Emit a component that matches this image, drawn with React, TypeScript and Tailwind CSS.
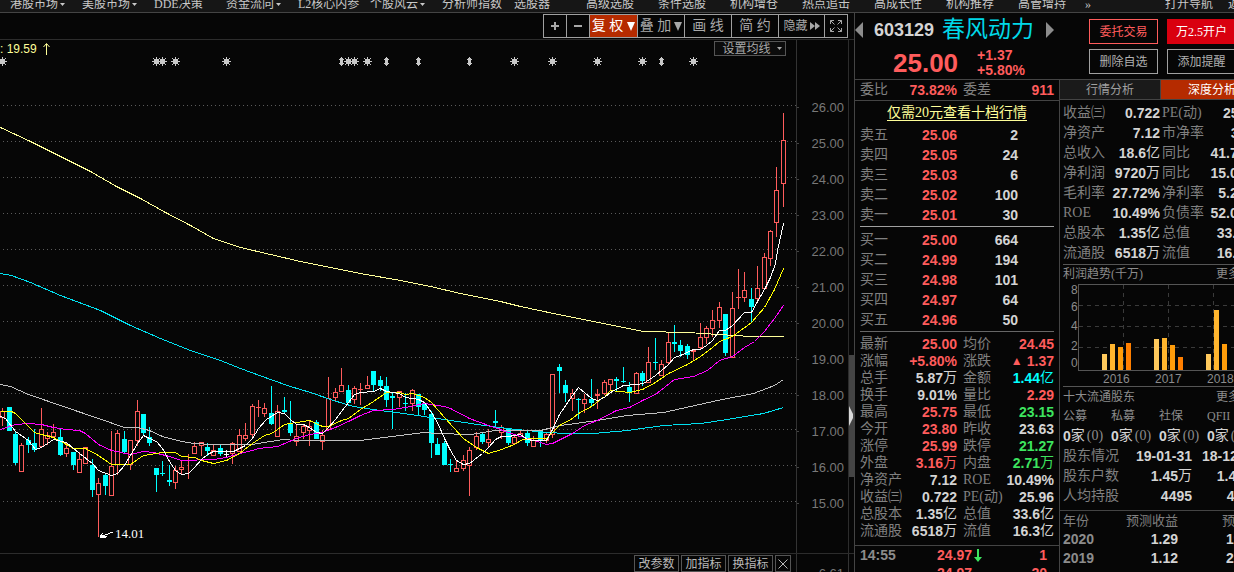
import type { ReactNode } from "react";

type Tone = "red" | "green" | "cyan" | "white" | "gray";

const toneClass: Record<Tone, string> = {
  red: "text-[#ff5c5c]",
  green: "text-[#3de45f]",
  cyan: "text-[#00ffff]",
  white: "text-[#d4d4d4]",
  gray: "text-[#8c8c8c]",
};

const menuItems = [
  { label: "港股市场", menu: true },
  { label: "美股市场", menu: true },
  { label: "DDE决策" },
  { label: "资金流向", menu: true },
  { label: "L2核心内参" },
  { label: "个股风云", menu: true },
  { label: "分析师指数" },
  { label: "选股器" },
  { label: "高级选股" },
  { label: "条件选股" },
  { label: "机构增仓" },
  { label: "热点追击" },
  { label: "高成长性" },
  { label: "机构推荐" },
  { label: "高管增持" },
];

// [x, high, low, bodyTop, bodyBottom, direction]
type Candle = [number, number, number, number, number, "u" | "d" | "f"];

const candles: Candle[] = [
  [2, 408, 426, 411, 418, "u"],
  [9, 407, 431, 407, 431, "d"],
  [15, 432, 465, 434, 463, "d"],
  [21, 443, 472, 445, 472, "u"],
  [28, 437, 453, 440, 445, "d"],
  [34, 429, 452, 443, 450, "d"],
  [41, 408, 447, 429, 447, "u"],
  [47, 432, 445, 435, 439, "u"],
  [53, 424, 438, 432, 437, "u"],
  [60, 429, 456, 437, 455, "d"],
  [66, 442, 457, 448, 454, "u"],
  [73, 452, 470, 452, 465, "d"],
  [79, 452, 473, 459, 473, "u"],
  [85, 447, 464, 447, 464, "u"],
  [92, 459, 497, 465, 490, "d"],
  [98, 478, 537, 483, 495, "u"],
  [105, 474, 495, 475, 486, "d"],
  [111, 431, 496, 466, 496, "u"],
  [117, 430, 475, 433, 465, "u"],
  [124, 431, 454, 439, 452, "d"],
  [130, 440, 470, 440, 465, "u"],
  [137, 400, 446, 411, 441, "u"],
  [143, 414, 436, 414, 433, "d"],
  [149, 427, 446, 437, 443, "d"],
  [156, 468, 492, 468, 475, "d"],
  [162, 461, 476, 473, 474, "d"],
  [169, 465, 486, 480, 482, "d"],
  [175, 466, 489, 470, 483, "u"],
  [181, 461, 475, 467, 470, "u"],
  [188, 454, 479, 460, 461, "u"],
  [194, 442, 454, 446, 454, "u"],
  [201, 442, 456, 442, 446, "u"],
  [207, 443, 456, 447, 451, "d"],
  [213, 444, 456, 450, 456, "u"],
  [220, 445, 456, 448, 454, "d"],
  [226, 450, 457, 454, 455, "f"],
  [232, 442, 464, 443, 454, "u"],
  [239, 429, 452, 435, 452, "u"],
  [245, 423, 441, 435, 439, "u"],
  [252, 404, 439, 406, 435, "u"],
  [258, 400, 417, 407, 408, "u"],
  [264, 403, 417, 408, 414, "u"],
  [271, 386, 425, 413, 424, "d"],
  [277, 405, 437, 411, 437, "u"],
  [284, 397, 414, 410, 412, "d"],
  [290, 401, 436, 424, 433, "d"],
  [296, 424, 446, 436, 442, "u"],
  [303, 425, 439, 426, 433, "u"],
  [309, 421, 446, 426, 431, "u"],
  [316, 420, 439, 422, 439, "d"],
  [322, 430, 450, 435, 442, "u"],
  [328, 377, 430, 398, 430, "u"],
  [335, 388, 401, 392, 398, "u"],
  [341, 368, 392, 385, 392, "u"],
  [348, 385, 403, 390, 403, "d"],
  [354, 386, 404, 388, 400, "u"],
  [360, 383, 405, 389, 390, "u"],
  [367, 376, 389, 385, 389, "u"],
  [373, 371, 392, 371, 385, "d"],
  [380, 376, 391, 380, 386, "d"],
  [386, 377, 407, 386, 400, "d"],
  [392, 392, 429, 396, 398, "d"],
  [399, 391, 407, 391, 398, "u"],
  [405, 393, 411, 403, 404, "d"],
  [412, 389, 411, 390, 404, "u"],
  [418, 394, 416, 394, 407, "d"],
  [424, 403, 415, 404, 410, "d"],
  [431, 411, 458, 414, 443, "d"],
  [437, 438, 455, 444, 455, "d"],
  [444, 441, 465, 443, 465, "d"],
  [450, 459, 472, 464, 465, "d"],
  [456, 461, 472, 468, 472, "u"],
  [463, 455, 471, 460, 469, "u"],
  [469, 447, 496, 450, 466, "u"],
  [476, 432, 450, 436, 448, "u"],
  [482, 432, 444, 434, 442, "d"],
  [488, 429, 448, 439, 443, "u"],
  [495, 410, 427, 421, 423, "d"],
  [501, 425, 439, 427, 433, "u"],
  [508, 428, 445, 429, 443, "d"],
  [514, 435, 444, 437, 444, "u"],
  [520, 431, 437, 433, 437, "u"],
  [527, 431, 446, 433, 443, "d"],
  [533, 436, 447, 440, 447, "u"],
  [540, 431, 447, 431, 441, "d"],
  [546, 433, 443, 434, 441, "u"],
  [552, 374, 438, 374, 435, "u"],
  [559, 364, 393, 367, 371, "d"],
  [565, 380, 402, 385, 393, "d"],
  [572, 389, 411, 393, 399, "u"],
  [578, 398, 419, 399, 400, "d"],
  [584, 394, 413, 399, 404, "u"],
  [591, 379, 407, 399, 403, "d"],
  [597, 389, 409, 394, 396, "u"],
  [604, 380, 395, 382, 394, "u"],
  [610, 379, 390, 379, 385, "u"],
  [616, 377, 391, 379, 381, "d"],
  [623, 367, 383, 381, 382, "d"],
  [629, 382, 402, 387, 392, "d"],
  [636, 372, 394, 373, 394, "u"],
  [642, 371, 386, 373, 381, "d"],
  [648, 347, 383, 362, 383, "u"],
  [655, 338, 370, 362, 363, "d"],
  [661, 360, 376, 364, 376, "u"],
  [668, 333, 364, 342, 363, "u"],
  [674, 325, 352, 342, 344, "d"],
  [680, 340, 357, 345, 351, "d"],
  [687, 344, 359, 346, 355, "d"],
  [693, 349, 360, 350, 352, "u"],
  [700, 323, 349, 337, 348, "u"],
  [706, 326, 344, 328, 338, "u"],
  [712, 310, 337, 320, 329, "u"],
  [719, 302, 328, 307, 321, "u"],
  [725, 314, 356, 314, 353, "d"],
  [732, 292, 358, 308, 358, "u"],
  [738, 269, 309, 297, 298, "u"],
  [744, 272, 302, 290, 298, "u"],
  [751, 288, 323, 299, 307, "d"],
  [757, 266, 300, 288, 299, "u"],
  [764, 253, 289, 257, 289, "u"],
  [770, 230, 266, 231, 259, "u"],
  [776, 167, 237, 190, 223, "u"],
  [783, 113, 207, 140, 184, "u"],
];

const averages = [
  {
    name: "MA250",
    color: "#ffff99",
    points:
      "0,127 30,141 48,150 90,171 116,186 140,198 165,212 190,225 213,238 240,247 270,254 300,261 330,267 360,273 400,280 430,286 460,293 500,301 520,306 553,313 593,321 643,331 687,332 750,336 783,336",
  },
  {
    name: "MA120",
    color: "#00e0f0",
    points:
      "0,273 11,275 30,282 60,295 100,310 130,325 160,338 190,350 220,360 240,368 270,379 290,386 310,392 333,400 353,406 380,410 403,413 437,418 477,424 507,428 546,432 567,433 593,433 627,430 663,425 700,423 727,419 763,413 783,407",
  },
  {
    name: "MA60",
    color: "#c0c0c0",
    points:
      "0,384 10,386 28,394 60,405 98,418 124,427 137,427 149,430 162,436 181,441 194,443 213,444 252,444 270,441 283,439 296,440 360,440 392,436 424,432 437,433 470,434 495,430 540,430 560,425 597,420 627,415 663,412 717,400 753,393 774,385 783,379",
  },
  {
    name: "MA20",
    color: "#ff00ff",
    points:
      "0,429 15,424 28,423 41,424 53,427 66,429 79,430 85,433 98,444 111,450 130,454 143,451 153,452 169,456 181,460 213,459 226,457 239,453 252,450 258,448 277,446 296,438 309,434 322,432 335,427 348,421 360,415 373,410 392,409 405,407 424,403 444,406 450,408 469,418 488,425 514,434 540,442 546,444 552,443 572,433 584,425 597,420 616,410 629,407 642,400 655,394 674,379 693,376 707,370 719,360 732,356 744,347 754,341 764,331 774,318 783,305",
  },
  {
    name: "MA10",
    color: "#ffff00",
    points:
      "0,411 11,411 15,413 25,423 34,432 41,434 53,437 66,444 73,448 85,448 98,455 111,464 130,464 137,459 143,455 162,452 175,452 181,456 194,457 201,460 213,463 226,460 239,453 252,443 264,435 271,433 277,429 284,424 296,422 309,420 322,426 328,426 341,420 348,418 360,409 373,401 386,392 399,392 405,394 412,393 424,397 431,402 444,417 463,438 476,447 488,453 501,449 514,444 522,439 533,438 546,438 552,432 559,425 572,418 578,413 591,406 604,396 610,390 629,392 642,389 655,382 668,373 687,364 700,356 712,347 719,341 732,336 751,322 764,307 774,289 783,268",
  },
  {
    name: "MA5",
    color: "#ffffff",
    points:
      "0,416 5,418 15,431 28,440 35,449 41,447 53,439 66,442 79,453 92,463 98,470 111,475 117,473 124,465 130,455 137,443 143,435 149,438 156,441 162,448 169,461 175,470 181,474 188,473 194,467 201,459 207,454 213,451 233,451 239,448 245,445 252,438 258,428 266,419 277,412 284,413 290,419 296,424 303,424 309,427 316,432 322,433 328,427 335,419 341,411 348,402 354,394 360,392 373,391 380,388 386,391 399,393 405,397 412,398 418,399 424,402 431,412 437,422 444,438 450,450 456,460 463,464 469,463 482,453 488,447 495,439 501,436 508,436 520,434 527,439 533,440 546,440 552,429 559,414 572,395 578,387 591,398 597,400 604,397 610,392 623,385 636,384 643,383 655,375 668,364 674,357 680,355 693,349 700,349 706,345 712,340 719,330 725,330 732,325 744,312 751,312 757,301 764,289 770,277 775,263 777,250 783,223",
  },
];

const gridLines = [106, 142, 178, 214, 250, 286, 322, 358, 394, 430, 466, 502];
const starMarks = [2, 156, 162, 175, 226, 348, 354, 367, 514, 552, 597, 642, 693];
const arrowMarks = [341, 386, 418, 469, 661];

const sells = [
  ["卖五", "25.06", "2"],
  ["卖四", "25.05", "24"],
  ["卖三", "25.03", "6"],
  ["卖二", "25.02", "100"],
  ["卖一", "25.01", "30"],
];

const buys = [
  ["买一", "25.00", "664"],
  ["买二", "24.99", "194"],
  ["买三", "24.98", "101"],
  ["买四", "24.97", "64"],
  ["买五", "24.96", "50"],
];

const quotes: [string, string, Tone, string, string, Tone][] = [
  ["最新", "25.00", "red", "均价", "24.45", "red"],
  ["涨幅", "+5.80%", "red", "涨跌", "▲1.37", "red"],
  ["总手", "5.87万", "white", "金额", "1.44亿", "cyan"],
  ["换手", "9.01%", "white", "量比", "2.29", "red"],
  ["最高", "25.75", "red", "最低", "23.15", "green"],
  ["今开", "23.80", "red", "昨收", "23.63", "white"],
  ["涨停", "25.99", "red", "跌停", "21.27", "green"],
  ["外盘", "3.16万", "red", "内盘", "2.71万", "green"],
  ["净资产", "7.12", "white", "ROE", "10.49%", "white"],
  ["收益㈢", "0.722", "white", "PE(动)", "25.96", "white"],
  ["总股本", "1.35亿", "white", "总值", "33.6亿", "white"],
  ["流通股", "6518万", "white", "流值", "16.3亿", "white"],
];

const finance = [
  ["收益㈢", "0.722", "PE(动)", "25.96"],
  ["净资产", "7.12", "市净率", "3.51"],
  ["总收入", "18.6亿", "同比", "41.76%"],
  ["净利润", "9720万", "同比", "15.02%"],
  ["毛利率", "27.72%", "净利率", "5.23%"],
  ["ROE", "10.49%", "负债率", "52.02%"],
  ["总股本", "1.35亿", "总值", "33.6亿"],
  ["流通股", "6518万", "流值", "16.3亿"],
];

const profitBars = [
  [1102, 354, "#ffc95c"],
  [1110, 344, "#ffb52e"],
  [1118, 347, "#ff9c0a"],
  [1126, 343, "#ff7f00"],
  [1154, 339, "#ffc95c"],
  [1162, 338, "#ffb52e"],
  [1170, 345, "#ff9c0a"],
  [1178, 357, "#ff7f00"],
  [1206, 354, "#ffc95c"],
  [1214, 310, "#ffb52e"],
  [1222, 344, "#ff9c0a"],
] as const;

const funds = ["公募", "私募", "社保", "QFII"];

// Digits are bold, the trailing unit is a regular CJK glyph.
function Num({ value, tone = "white" }: { value: string; tone?: Tone }) {
  const [, lead, digits, unit] = value.match(/^(▲?)([^万亿]*)([万亿]?)$/) ?? ["", "", value, ""];
  return (
    <span className={`inline-flex items-center whitespace-nowrap ${toneClass[tone]}`}>
      {lead && <span className="mr-1 text-xs leading-none">{lead}</span>}
      <span className="font-['Liberation_Sans',sans-serif] text-[14px] font-bold leading-none">{digits}</span>
      {unit && <span className="text-[14px] leading-none">{unit}</span>}
    </span>
  );
}

function Caret() {
  return (
    <svg width="5" height="3" viewBox="0 0 5 3" fill="currentColor" aria-hidden="true">
      <path d="M0 0h5L2.500 3z" />
    </svg>
  );
}

function TopMenu() {
  return (
    <nav className="flex h-[13px] shrink-0 overflow-hidden border-b border-[#444] bg-[#161616] text-xs leading-none text-[#c8c8c8]">
      <div className="-mt-[2px] flex min-w-0 flex-1 items-start overflow-hidden pl-[10px]">
        {menuItems.map((item) => (
          <button key={item.label} className="flex w-[72px] shrink-0 items-center gap-[2px] whitespace-nowrap">
            {item.label}
            {item.menu && <Caret />}
          </button>
        ))}
      </div>
      <div className="-mt-[2px] flex w-[149px] shrink-0 items-start overflow-hidden">
        <button className="w-20 shrink-0 text-left">»</button>
        <button className="w-[63px] shrink-0 text-left">打开导航</button>
        <button className="shrink-0">返回</button>
      </div>
    </nav>
  );
}

function ToolButton({ label, className, children }: { label?: string; className: string; children: ReactNode }) {
  return (
    <button
      aria-label={label}
      className={`flex h-full items-center justify-center whitespace-nowrap border-l border-[#a0a0a0] ${className}`}
    >
      {children}
    </button>
  );
}

function DropMark() {
  return (
    <svg width="8" height="9" viewBox="0 0 8 9" fill="currentColor" aria-hidden="true">
      <path d="M0 0h8L4 9z" />
    </svg>
  );
}

function Toolbar() {
  return (
    <div className="flex h-[27px] shrink-0 items-start justify-end border-b border-[#2c2c2c] pr-[6px] pt-px">
      <div className="flex h-6 border border-l-0 border-[#a0a0a0] text-[14px] leading-none text-[#a8a8a8]">
        <ToolButton label="放大" className="w-[23px]">
          <svg width="8" height="8" viewBox="0 0 8 8" fill="currentColor" shapeRendering="crispEdges">
            <path d="M3 0h2v8H3zM0 3h8v2H0z" />
          </svg>
        </ToolButton>
        <ToolButton label="缩小" className="w-[23px]">
          <svg width="8" height="8" viewBox="0 0 8 8" fill="currentColor" shapeRendering="crispEdges">
            <path d="M0 3h8v2H0z" />
          </svg>
        </ToolButton>
        <ToolButton className="w-12 gap-1 bg-[#b52b00] text-white">
          复 权
          <DropMark />
        </ToolButton>
        <ToolButton className="w-[47px] gap-[3px]">
          叠 加
          <DropMark />
        </ToolButton>
        <ToolButton className="w-[47px]">画 线</ToolButton>
        <ToolButton className="w-[47px]">简 约</ToolButton>
        <ToolButton className="w-[46px] gap-[2px] text-xs leading-none">
          隐藏
          <svg width="10" height="8" viewBox="0 0 10 8" fill="currentColor" aria-hidden="true">
            <path d="M0 0l5 4-5 4zM5 0l5 4-5 4z" />
          </svg>
        </ToolButton>
        <ToolButton label="全屏" className="w-[23px]">
          <svg width="12" height="12" viewBox="0 0 12 12" fill="none" stroke="currentColor" aria-hidden="true">
            <path d="M0.500 4V0.500H4M0.500 0.500l4 4M8 0.500h3.500V4M11.500 0.500l-4 4M0.500 8v3.500H4M0.500 11.500l4-4M8 11.500h3.500V8M11.500 11.500l-4-4" />
          </svg>
        </ToolButton>
      </div>
    </div>
  );
}

function CandleShape({ candle }: { candle: Candle }) {
  const [x, high, low, top, bottom, dir] = candle;
  const color = dir === "u" ? "#ff5c5c" : dir === "d" ? "#00ffff" : "#ffffff";
  const hollow = dir === "u" && bottom - top > 2;
  return (
    <g>
      <rect x={x} y={high} width="1" height={low - high} fill={color} />
      <rect x={x - 2} y={top} width="5" height={Math.max(bottom - top, 1)} fill={color} />
      {hollow && <rect x={x - 1} y={top + 1} width="3" height={bottom - top - 2} fill="#060606" />}
    </g>
  );
}

function CandleChart() {
  return (
    <svg viewBox="0 40 796 513" className="block h-full w-full" shapeRendering="crispEdges" role="img" aria-label="日K线">
      {gridLines.map((y) => (
        <path key={y} d={`M3 ${y - 0.5}H796`} stroke="#5a5a5a" strokeDasharray="1 3" />
      ))}
      {candles.map((candle) => (
        <CandleShape key={candle[0]} candle={candle} />
      ))}
      {averages.map((line) => (
        <polyline key={line.name} points={line.points} fill="none" stroke={line.color} transform="translate(0.5 0.5)" />
      ))}
      {starMarks.map((x) => (
        <path
          key={x}
          transform={`translate(${x} 61)`}
          d="M0-4h1v9H0zM-4 0h9v1h-9zM-2-2h5v5h-5zM-3-3h1v1h-1zM3-3h1v1h-1zM-3 3h1v1h-1zM3 3h1v1h-1z"
          fill="#c8c8c8"
        />
      ))}
      {arrowMarks.map((x) => (
        <path key={x} transform={`translate(${x} 61)`} d="M0-4h1v9H0zM-1-3h3v7h-3zM-2-2h5v1h-5zM-2 2h5v1h-5z" fill="#c8c8c8" />
      ))}
      <path d="M100 537l13-5M100 537l6 0M100 537l3-4M101 536h6" stroke="#fff" fill="none" />
      <text x="115" y="538" fill="#fff" fontSize="13" fontFamily="'Liberation Serif', serif">
        14.01
      </text>
    </svg>
  );
}

function PriceAxis() {
  return (
    <div className="w-[52px] shrink-0 border-l border-[#333] pt-[49px] font-['Liberation_Sans',sans-serif] text-[13px] text-[#787878]">
      {gridLines.map((y, i) => (
        <div key={y} className="flex h-9 items-center">
          <span className="h-px w-[2px] bg-[#444]" />
          <span className="flex-1 pr-1 text-right leading-none">{(26 - i).toFixed(2)}</span>
        </div>
      ))}
    </div>
  );
}

function ChartPane() {
  return (
    <main className="flex min-w-0 flex-1 flex-col">
      <Toolbar />
      <div className="flex min-h-0 flex-1">
        <div className="relative min-w-0 flex-1">
          <CandleChart />
          <p className="absolute left-0 top-[3px] flex items-center font-['Liberation_Sans',sans-serif] text-xs leading-none text-[#ffff99]">
            : 19.59
            <svg className="ml-[6px]" width="7" height="12" viewBox="0 0 7 12" fill="none" stroke="currentColor" aria-hidden="true">
              <path d="M3.500 12V1M0.500 4l3-3.500 3 3.500" />
            </svg>
          </p>
          <button className="absolute right-[10px] top-px flex h-[15px] w-[72px] items-center justify-center gap-[6px] border border-[#555] bg-[#0c0c0c] pl-1 text-xs leading-none text-[#a8a8a8]">
            设置均线
            <Caret />
          </button>
        </div>
        <PriceAxis />
        <div className="flex w-[6px] shrink-0 flex-col border-l border-[#2c2c2c] pt-[315px]">
          <div className="flex h-[122px] items-center bg-[#444]">
            <svg width="4" height="20" viewBox="0 0 4 20" fill="#d8d8d8" aria-hidden="true">
              <path d="M0 0l4 8v4l-4 8z" />
            </svg>
          </div>
        </div>
      </div>
      <footer className="flex h-[19px] shrink-0 overflow-hidden border-t border-[#2c2c2c]">
        <div className="flex flex-1 justify-end gap-[2px] pr-[5px] pt-px text-xs leading-none text-[#b8b8b8]">
          {["改参数", "加指标", "换指标"].map((label) => (
            <button key={label} className="h-[17px] w-[45px] whitespace-nowrap border border-[#555]">
              {label}
            </button>
          ))}
          <button aria-label="关闭" className="flex h-[17px] w-4 items-center justify-center border border-[#555]">
            <svg width="10" height="10" viewBox="0 0 10 10" stroke="currentColor" aria-hidden="true">
              <path d="M0.500 0.500l9 9M9.500 0.500l-9 9" />
            </svg>
          </button>
        </div>
        <div className="w-[53px] shrink-0 border-x border-[#333] pr-1 pt-[13px] text-right font-['Liberation_Sans',sans-serif] text-[13px] leading-none text-[#787878]">
          6.61
        </div>
        <div className="w-[5px] shrink-0" />
      </footer>
    </main>
  );
}

function StockHeader() {
  const action = "h-[25px] w-[69px] shrink-0 whitespace-nowrap border text-xs leading-none";
  return (
    <header className="flex h-[67px] shrink-0 overflow-hidden border-b border-[#444]">
      <div className="w-[234px] shrink-0">
        <div className="flex h-[33px] items-center">
          <button aria-label="上一只" className="text-[#8c8c8c]">
            <svg width="8" height="16" viewBox="0 0 8 16" fill="currentColor">
              <path d="M8 0v16L0 8z" />
            </svg>
          </button>
          <span className="ml-[11px] font-['Liberation_Sans',sans-serif] text-[18px] font-bold leading-none text-[#d4d4d4]">
            603129
          </span>
          <h1 className="ml-2 text-[23px] leading-none text-[#00d8e8]">春风动力</h1>
          <button aria-label="下一只" className="ml-3 text-[#8c8c8c]">
            <svg width="8" height="16" viewBox="0 0 8 16" fill="currentColor">
              <path d="M0 0v16l8-8z" />
            </svg>
          </button>
        </div>
        <div className="flex h-[33px] items-center font-['Liberation_Sans',sans-serif] text-[#ff5c5c]">
          <strong className="ml-[38px] text-[26px] leading-none">25.00</strong>
          <div className="ml-[19px] text-[14px] font-bold leading-[15px]">
            <p>+1.37</p>
            <p>+5.80%</p>
          </div>
        </div>
      </div>
      <div className="grid grid-cols-[69px_69px] content-start gap-x-[9px] gap-y-[5px] pt-[6px]">
        <button className={`${action} border-[#ff5c5c] text-[#ff5c5c]`}>委托交易</button>
        <button className={`${action} border-[#d9000f] bg-[#d9000f] text-white`}>万2.5开户</button>
        <button className={`${action} border-[#a0a0a0] text-[#b0b0b0]`}>删除自选</button>
        <button className={`${action} border-[#a0a0a0] text-[#b0b0b0]`}>添加提醒</button>
      </div>
    </header>
  );
}

function BookTable({ rows }: { rows: string[][] }) {
  return (
    <table className="w-full table-fixed leading-none">
      <tbody>
        {rows.map(([label, price, volume]) => (
          <tr key={label} className="h-5">
            <th scope="row" className="w-10 p-0 text-left text-[14px] font-normal leading-none text-[#808080]">
              {label}
            </th>
            <td className="w-[57px] p-0 text-right">
              <Num value={price} tone="red" />
            </td>
            <td className="w-[61px] p-0 text-right">
              <Num value={volume} />
            </td>
            <td />
          </tr>
        ))}
      </tbody>
    </table>
  );
}

function Pair({ label, value, tone }: { label: string; value: string; tone?: Tone }) {
  return (
    <div className="flex items-center justify-between whitespace-nowrap text-[14px] leading-none text-[#808080]">
      <dt>{label}</dt>
      <dd className="flex">
        <Num value={value} tone={tone} />
      </dd>
    </div>
  );
}

function QuotePane() {
  return (
    <section className="w-[205px] shrink-0 overflow-hidden border-r border-[#444]">
      <dl className="grid h-[21px] grid-cols-[97px_91px] gap-x-[6px] border-b border-[#444] pl-[5px]">
        <Pair label="委比" value="73.82%" tone="red" />
        <Pair label="委差" value="911" tone="red" />
      </dl>
      <div className="flex h-6 items-center justify-center">
        <a href="#level2" className="border-b border-[#ffff99] text-[14px] leading-none text-[#ffff99]">
          仅需20元查看十档行情
        </a>
      </div>
      <div className="pl-[5px] pr-[5px]">
        <BookTable rows={sells} />
        <div className="mb-[3px] mt-px border-t border-[#a0a0a0]" />
        <BookTable rows={buys} />
        <div className="mt-px border-t border-[#666]" />
      </div>
      <dl className="pl-[5px] pt-[3px]">
        {quotes.map(([l1, v1, t1, l2, v2, t2]) => (
          <div key={l1} className="grid h-[17px] grid-cols-[97px_91px] gap-x-[6px]">
            <Pair label={l1} value={v1} tone={t1} />
            <Pair label={l2} value={v2} tone={t2} />
          </div>
        ))}
      </dl>
      <div className="mt-[6px] border-t border-[#444] pl-[5px] pr-[12px]">
        <div className="grid h-[18px] grid-cols-[112px_12px_1fr] items-center">
          <span className="flex justify-between">
            <Num value="14:55" tone="gray" />
            <Num value="24.97" tone="red" />
          </span>
          <svg className="ml-[2px]" width="8" height="13" viewBox="0 0 8 13" fill="#3de45f" aria-label="跌">
            <path d="M3 0h2v8h3l-4 5-4-5h3z" />
          </svg>
          <span className="flex justify-end">
            <Num value="1" tone="red" />
          </span>
        </div>
        <div className="grid h-[18px] grid-cols-[112px_12px_1fr] items-center">
          <span className="flex justify-end">
            <Num value="24.97" tone="red" />
          </span>
          <span />
          <span className="flex justify-end">
            <Num value="20" tone="red" />
          </span>
        </div>
      </div>
    </section>
  );
}

function ProfitChart() {
  return (
    <svg viewBox="1060 282 174 104" width="174" height="104" className="block" shapeRendering="crispEdges" role="img" aria-label="利润趋势">
      <path d="M1079 305.500H1234M1079 326.500H1234M1079 347.500H1234M1123.500 285V370M1168.500 285V370M1213.500 285V370" stroke="#3a3a3a" strokeDasharray="4 4" />
      <path d="M1234 284.500H1078.500V370.500H1234" fill="none" stroke="#555" />
      {profitBars.map(([x, y, color]) => (
        <rect key={x} x={x} y={y} width="5" height={370 - y} fill={color} />
      ))}
      <g fill="#8c8c8c" fontSize="12" fontFamily="'Liberation Sans', sans-serif">
        <text x="1071" y="294">8</text>
        <text x="1071" y="311">6</text>
        <text x="1071" y="330">4</text>
        <text x="1071" y="350">2</text>
        <text x="1071" y="367">0</text>
        <text x="1103" y="383">2016</text>
        <text x="1155" y="383">2017</text>
        <text x="1207" y="383">2018</text>
      </g>
    </svg>
  );
}

function AnalysisPane() {
  return (
    <section className="min-w-0 flex-1 overflow-hidden">
      <div className="flex h-5 w-[203px] border-b border-[#444] text-xs leading-none" role="tablist">
        <button role="tab" aria-selected="false" className="w-[101px] shrink-0 border-r border-[#444] bg-[#1a1a1a] text-[#a0a0a0]">
          行情分析
        </button>
        <button role="tab" aria-selected="true" className="w-[102px] shrink-0 bg-[#b52b00] text-white">
          深度分析
        </button>
      </div>
      <dl className="w-[201px] pl-[3px] pt-[3px]">
        {finance.map(([l1, v1, l2, v2]) => (
          <div key={l1} className="grid h-5 grid-cols-[97px_96px] gap-x-[2px]">
            <Pair label={l1} value={v1} />
            <Pair label={l2} value={v2} />
          </div>
        ))}
      </dl>
      <div className="ml-[3px] mt-px flex h-[18px] w-[198px] items-center border-t border-[#555] text-xs leading-none text-[#8c8c8c]">
        <h2 className="w-[153px]">利润趋势(千万)</h2>
        <a href="#profit">更多</a>
      </div>
      <ProfitChart />
      <div className="ml-[3px] flex h-5 w-[198px] items-center border-t border-[#555] text-xs leading-none text-[#8c8c8c]">
        <h2 className="w-[153px]">十大流通股东</h2>
        <a href="#holders">更多</a>
      </div>
      <dl className="flex w-[201px] pl-[3px] leading-none">
        {funds.map((fund) => (
          <div key={fund} className="w-12 shrink-0">
            <dt className="flex h-5 items-center text-xs leading-none text-[#8c8c8c]">{fund}</dt>
            <dd className="flex h-5 items-center whitespace-nowrap text-[14px] leading-none text-[#8c8c8c]">
              <Num value="0" />
              <span className="text-[#d4d4d4]">家</span>
              <span className="ml-[2px]">(0)</span>
            </dd>
          </div>
        ))}
      </dl>
      <table className="w-[198px] table-fixed leading-none">
        <tbody>
          {[
            ["股东情况", "19-01-31", "18-12-31"],
            ["股东户数", "1.45万", "1.49万"],
            ["人均持股", "4495", "4375"],
          ].map(([label, a, b]) => (
            <tr key={label} className="h-5">
              <th scope="row" className="w-[67px] whitespace-nowrap p-0 pl-[3px] text-left text-[14px] font-normal leading-none text-[#808080]">
                {label}
              </th>
              <td className="w-[65px] p-0 text-right">
                <Num value={a} />
              </td>
              <td className="w-[66px] p-0 text-right">
                <Num value={b} />
              </td>
            </tr>
          ))}
        </tbody>
      </table>
      <table className="mt-1 w-[198px] table-fixed border-t border-[#444] leading-none">
        <thead>
          <tr className="h-[19px] text-[13px] leading-none text-[#808080]">
            <th className="w-11 p-0 pl-[3px] text-left font-normal">年份</th>
            <th className="w-[74px] p-0 text-right font-normal">预测收益</th>
            <th className="w-[80px] whitespace-nowrap p-0 pl-[44px] text-left font-normal">预测PE</th>
          </tr>
        </thead>
        <tbody>
          {[
            ["2020", "1.29", "19.38"],
            ["2019", "1.12", "22.32"],
          ].map(([year, eps, pe]) => (
            <tr key={year} className="h-[19px]">
              <th scope="row" className="p-0 pl-[3px] text-left">
                <Num value={year} tone="gray" />
              </th>
              <td className="p-0 text-right">
                <Num value={eps} />
              </td>
              <td className="p-0 pl-[48px] text-left">
                <Num value={pe} />
              </td>
            </tr>
          ))}
        </tbody>
      </table>
    </section>
  );
}

export default function App() {
  return (
    <div className="flex h-screen flex-col overflow-hidden bg-[#060606] font-['Liberation_Serif','Noto_Sans_CJK_SC',sans-serif]">
      <TopMenu />
      <div className="flex min-h-0 flex-1">
        <ChartPane />
        <aside className="flex w-[380px] shrink-0 flex-col overflow-hidden border-l border-[#444]">
          <StockHeader />
          <div className="flex min-h-0 flex-1">
            <QuotePane />
            <AnalysisPane />
          </div>
        </aside>
      </div>
    </div>
  );
}
